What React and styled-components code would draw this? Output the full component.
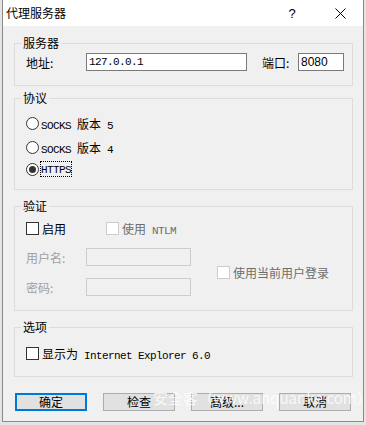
import React from "react";
import styled, { createGlobalStyle } from "styled-components";

const cjk = `"Noto Sans CJK SC", "Noto Sans", sans-serif`;
const mono = `"Liberation Mono", "Noto Sans CJK SC", monospace`;

const GlobalStyle = createGlobalStyle`
  html, body {
    margin: 0;
    padding: 0;
    background: #e4e4e4;
  }
  body {
    font-family: ${cjk};
    font-size: 12px;
    color: #000;
  }
`;

const Dialog = styled.div`
  margin-left: 2px;
  width: 360px;
  height: 421px;
  border: 1px solid #8a8a8a;
  border-top: none;
  background: #f0f0f0;
  display: flex;
  flex-direction: column;
  position: relative;
  overflow: hidden;
`;

const TitleBar = styled.div`
  height: 26px;
  background: #fff;
  display: flex;
  align-items: center;
  padding-left: 3px;
  flex-shrink: 0;
`;

const Title = styled.span`
  flex: 1;
  font-size: 12px;
  line-height: 16px;
`;

const HelpButton = styled.span`
  width: 12px;
  margin-right: 36px;
  font-family: "Liberation Sans", sans-serif;
  font-size: 13px;
  text-align: center;
`;

const CloseButton = styled.span`
  width: 12px;
  height: 12px;
  margin-right: 17px;
  display: flex;
  align-items: center;
  justify-content: center;
`;

const Body = styled.div`
  flex: 1;
  display: flex;
  flex-direction: column;
  padding: 0 10px 0 11px;
`;

const Group = styled.fieldset`
  margin: ${(p) => p.$top}px 0 0 0;
  padding: ${(p) => p.$pad};
  border: 1px solid #dcdcdc;
  min-width: 0;
`;

const Legend = styled.legend`
  margin-left: -5px;
  padding: 0 2px;
  font-size: 12px;
  line-height: 16px;
`;

const Row = styled.div`
  display: flex;
  align-items: center;
  height: ${(p) => p.$h || 18}px;
  margin-top: ${(p) => p.$mt || 0}px;
`;

const Label = styled.span`
  width: ${(p) => p.$w}px;
  margin-left: ${(p) => p.$ml || 0}px;
  color: ${(p) => (p.$disabled ? "#a0a0a0" : "#000")};
  flex-shrink: 0;
`;

const Input = styled.div`
  box-sizing: border-box;
  width: ${(p) => p.$w}px;
  height: 18px;
  border: 1px solid ${(p) => (p.$disabled ? "#cccccc" : "#7a7a7a")};
  background: ${(p) => (p.$disabled ? "#f0f0f0" : "#fff")};
  padding-left: 2px;
  display: flex;
  align-items: center;
  font-family: ${(p) => (p.$sans ? `"Liberation Sans", sans-serif` : mono)};
  font-size: ${(p) => (p.$sans ? 12 : 11)}px;
  letter-spacing: ${(p) => (p.$sans ? 0 : -0.6)}px;
  flex-shrink: 0;
`;

const Caption = styled.span`
  white-space: pre;
`;

const Latin = styled.span`
  font-family: ${mono};
  font-size: 11px;
  letter-spacing: -0.6px;
`;

const Radio = styled.span`
  box-sizing: border-box;
  width: 13px;
  height: 13px;
  border-radius: 50%;
  border: 1px solid #333;
  background: #fff;
  display: flex;
  align-items: center;
  justify-content: center;
  margin-right: 2px;
  flex-shrink: 0;
  &::after {
    content: "";
    display: ${(p) => (p.$checked ? "block" : "none")};
    width: 7px;
    height: 7px;
    border-radius: 50%;
    background: #333;
  }
`;

const Check = styled.span`
  box-sizing: border-box;
  width: 13px;
  height: 13px;
  border: 1px solid ${(p) => (p.$disabled ? "#cccccc" : "#333")};
  background: #fff;
  margin-right: 3px;
  flex-shrink: 0;
`;

const Option = styled.label`
  display: flex;
  align-items: center;
  color: ${(p) => (p.$disabled ? "#6d6d6d" : "#000")};
  margin-left: ${(p) => p.$ml || 0}px;
`;

const Focus = styled.span`
  outline: 1px dotted #000;
  outline-offset: 0;
  line-height: 12px;
`;

const AuthGrid = styled.div`
  display: grid;
  grid-template-columns: 191px auto;
  align-items: center;
  margin-top: 12px;
`;

const AuthFields = styled.div`
  display: flex;
  flex-direction: column;
  gap: 12px;
`;

const ButtonBar = styled.div`
  display: flex;
  gap: 16px;
  margin: 16px 0 0 1px;
`;

const Button = styled.button`
  box-sizing: border-box;
  width: 72px;
  height: 18px;
  padding: 0;
  background: #e1e1e1;
  border: ${(p) => (p.$primary ? "2px solid #0078d7" : "1px solid #adadad")};
  font-family: ${cjk};
  font-size: 12px;
  line-height: 14px;
  color: #000;
`;

const Watermark = styled.div`
  position: absolute;
  left: 150px;
  top: 387px;
  font-family: ${cjk};
  font-size: 15px;
  color: rgba(255, 255, 255, 0.8);
  white-space: nowrap;
  pointer-events: none;
`;

export default function App() {
  return (
    <>
      <GlobalStyle />
      <Dialog>
        <TitleBar>
          <Title>代理服务器</Title>
          <HelpButton>?</HelpButton>
          <CloseButton>
            <svg width="11" height="11" viewBox="0 0 11 11">
              <path d="M0.5 0.5 L10.5 10.5 M10.5 0.5 L0.5 10.5" stroke="#000" strokeWidth="1" />
            </svg>
          </CloseButton>
        </TitleBar>
        <Body>
          <Group $top={9} $pad="0 8px 14px 11px">
            <Legend>服务器</Legend>
            <Row $mt={2}>
              <Label $w={60}>地址:</Label>
              <Input $w={161}>127.0.0.1</Input>
              <Label $w={36} $ml={15}>端口:</Label>
              <Input $w={46} $sans>8080</Input>
            </Row>
          </Group>

          <Group $top={4} $pad="0 8px 12px 11px">
            <Legend>协议</Legend>
            <Row $h={16} $mt={9}>
              <Option>
                <Radio />
                <Caption>
                  <Latin>SOCKS </Latin>版本<Latin> 5</Latin>
                </Caption>
              </Option>
            </Row>
            <Row $h={16} $mt={8}>
              <Option>
                <Radio />
                <Caption>
                  <Latin>SOCKS </Latin>版本<Latin> 4</Latin>
                </Caption>
              </Option>
            </Row>
            <Row $h={16} $mt={6}>
              <Option>
                <Radio $checked />
                <Focus>
                  <Latin>HTTPS</Latin>
                </Focus>
              </Option>
            </Row>
          </Group>

          <Group $top={8} $pad="0 8px 14px 11px">
            <Legend>验证</Legend>
            <Row $h={16} $mt={6}>
              <Option>
                <Check />
                <Caption>启用</Caption>
              </Option>
              <Option $disabled $ml={40}>
                <Check $disabled />
                <Caption>
                  使用<Latin> NTLM</Latin>
                </Caption>
              </Option>
            </Row>
            <AuthGrid>
              <AuthFields>
                <Row>
                  <Label $w={60} $disabled>用户名:</Label>
                  <Input $w={105} $disabled />
                </Row>
                <Row>
                  <Label $w={60} $disabled>密码:</Label>
                  <Input $w={105} $disabled />
                </Row>
              </AuthFields>
              <Option $disabled>
                <Check $disabled />
                <Caption>使用当前用户登录</Caption>
              </Option>
            </AuthGrid>
          </Group>

          <Group $top={8} $pad="0 8px 15px 11px">
            <Legend>选项</Legend>
            <Row $h={16} $mt={10}>
              <Option>
                <Check />
                <Caption>
                  显示为<Latin> Internet Explorer 6.0</Latin>
                </Caption>
              </Option>
            </Row>
          </Group>

          <ButtonBar>
            <Button $primary>确定</Button>
            <Button>检查</Button>
            <Button>高级...</Button>
            <Button>取消</Button>
          </ButtonBar>
        </Body>
        <Watermark>安全客（www.anquanke.com）</Watermark>
      </Dialog>
    </>
  );
}
